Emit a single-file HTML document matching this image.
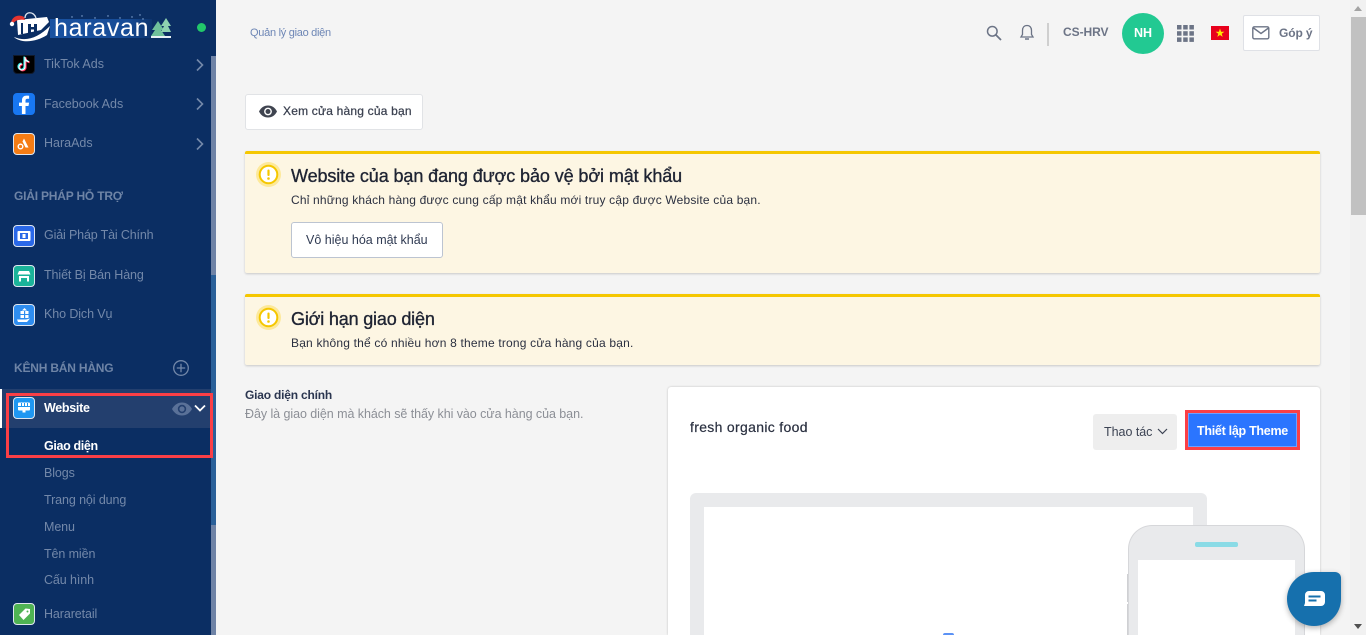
<!DOCTYPE html>
<html lang="vi"><head><meta charset="utf-8"><title>Giao diện</title>
<style>
html,body{margin:0;padding:0;width:1366px;height:635px;overflow:hidden;background:#f4f4f4;font-family:"Liberation Sans","Noto Sans CJK SC",sans-serif}
*{box-sizing:border-box}
.t{position:absolute;white-space:nowrap;line-height:18px}
.b{position:absolute}
.side{color:#7388a9;font-size:12.5px;letter-spacing:-.1px}
.ic{position:absolute;left:13px;width:22px;height:22px;border-radius:4px;border:1px solid #dfe6f0;overflow:hidden}
.chev{position:absolute;left:195px;width:10px;height:14px}
.sec{color:#6e84a6;font-size:12px;font-weight:bold;letter-spacing:-.2px}
.alert{position:absolute;left:245px;width:1075px;background:#fdf6e3;border-top:3px solid #f5c700;border-radius:2px;box-shadow:0 1px 2px rgba(0,0,0,.18)}
.h{-webkit-text-stroke:.35px #1f2433}
</style></head><body>

<!-- SIDEBAR -->
<div class="b" style="left:0;top:0;width:216px;height:635px;background:#0b2e63;overflow:hidden">
  <div class="b" style="left:211px;top:56px;width:5px;height:219px;background:#6f83a6"></div>
  <div class="b" style="left:211px;top:275px;width:5px;height:250px;background:#2a6099"></div>
  <div class="b" style="left:211px;top:525px;width:5px;height:110px;background:#6f83a6"></div>

  <!-- logo -->
  <svg class="b" style="left:0;top:0" width="180" height="48" viewBox="0 0 180 48">
    <defs><linearGradient id="g" x1="0" x2="1" y1="0" y2="0"><stop offset="0" stop-color="#1b56a8" stop-opacity=".9"/><stop offset=".75" stop-color="#1b56a8" stop-opacity=".75"/><stop offset="1" stop-color="#1b56a8" stop-opacity=".15"/></linearGradient></defs>
    <rect x="50" y="19" width="102" height="19" fill="url(#g)"/>
    <g fill="#8fb0dc"><circle cx="72" cy="17" r=".7"/><circle cx="82" cy="16" r=".7"/><circle cx="95" cy="18" r=".7"/><circle cx="108" cy="16" r=".7"/><circle cx="120" cy="18" r=".7"/><circle cx="132" cy="17" r=".7"/><circle cx="143" cy="19" r=".7"/><circle cx="140" cy="15" r=".7"/></g>
    <path d="M25 18c0-7 9-7 11 0" fill="none" stroke="#dfe6f0" stroke-width="1.300"/>
    <path d="M17 20l30-3 2 5-8 8-23 5z" fill="#fff"/>
    <rect x="21" y="23" width="2" height="11" fill="#0b2e63"/>
    <rect x="28" y="24" width="3" height="9" fill="#0b2e63"/><rect x="34" y="24" width="3" height="8" fill="#0b2e63"/><rect x="28" y="27" width="9" height="2.500" fill="#0b2e63"/>
    <path d="M14 37c12 5 24 1 36-11l-3 9c-9 6-23 9-32 3z" fill="#fff"/>
    <path d="M11 23c1-7 8-9 13-6l1 3c-5-1-10 0-12 4z" fill="#e5342f"/>
    <circle cx="12" cy="24" r="2.200" fill="#fff"/>
    <path d="M158 21l-6 9h3l-4 6h14l-4-6h3z" fill="#6fc09a"/>
    <path d="M166 18l-5 8h3l-3 6h10l-3-6h3z" fill="#8fd2b0"/>
    <rect x="151" y="36" width="20" height="2" fill="#e8f1f5"/>
  </svg>
  <div class="t" style="left:54px;top:14px;color:#fff;font-size:25px;line-height:28px;letter-spacing:.7px">haravan</div>
  <div class="b" style="left:197px;top:23px;width:9px;height:9px;border-radius:50%;background:#22c76a"></div>

  <!-- TikTok -->
  <div class="ic" style="top:55px;height:19px;background:#000;border-color:#101a2c;border-radius:0 0 4px 4px"><svg width="22" height="20" viewBox="0 0 22 20" style="position:absolute;left:-1px;top:-2px"><path d="M12 3v10a3 3 0 1 1-3-3M12 4c.6 2.400 2 3.500 4 3.800" fill="none" stroke="#ff2a55" stroke-width="1.800" transform="translate(.7 .5)"/><path d="M12 3v10a3 3 0 1 1-3-3M12 4c.6 2.400 2 3.500 4 3.800" fill="none" stroke="#35e8e8" stroke-width="1.800" transform="translate(-.7 -.5)"/><path d="M12 3v10a3 3 0 1 1-3-3M12 4c.6 2.400 2 3.500 4 3.800" fill="none" stroke="#fff" stroke-width="1.200"/></svg></div>
  <div class="t side" style="left:44px;top:55px;letter-spacing:0">TikTok Ads</div>
  <svg class="chev" style="top:58px" viewBox="0 0 10 14"><path d="M2 1.500l5.500 5.500l-5.500 5.500" fill="none" stroke="#7388a9" stroke-width="1.600"/></svg>

  <!-- Facebook -->
  <div class="ic" style="top:93px;background:#1877f2;border-color:#1877f2"><svg width="22" height="22" viewBox="0 0 22 22" style="position:absolute;left:-1px;top:-1px"><path d="M12.500 22v-9h3l.6-3.400h-3.600V7.500c0-1 .5-1.800 1.900-1.800h1.700V2.800c-.7-.1-1.600-.2-2.500-.2-2.800 0-4.600 1.700-4.600 4.500v2.500H6v3.400h2.900v9z" fill="#fff"/></svg></div>
  <div class="t side" style="left:44px;top:95px;letter-spacing:0">Facebook Ads</div>
  <svg class="chev" style="top:97px" viewBox="0 0 10 14"><path d="M2 1.500l5.500 5.500l-5.500 5.500" fill="none" stroke="#7388a9" stroke-width="1.600"/></svg>

  <!-- HaraAds -->
  <div class="ic" style="top:133px;background:#f57c14"><svg width="20" height="20" viewBox="0 0 20 20" style="position:absolute"><path d="M10 4.500l4.500 9h-3l-3-6z" fill="#fff"/><circle cx="6.500" cy="12.500" r="2.300" fill="none" stroke="#fff" stroke-width="1.400"/></svg></div>
  <div class="t side" style="left:44px;top:134px;letter-spacing:0">HaraAds</div>
  <svg class="chev" style="top:137px" viewBox="0 0 10 14"><path d="M2 1.500l5.500 5.500l-5.500 5.500" fill="none" stroke="#7388a9" stroke-width="1.600"/></svg>

  <div class="t sec" style="left:14px;top:187px">GIẢI PHÁP HỖ TRỢ</div>

  <div class="ic" style="top:225px;background:#2a68e8"><svg width="20" height="20" viewBox="0 0 20 20" style="position:absolute"><rect x="3.500" y="5" width="13" height="10" rx="1" fill="#fff"/><rect x="6" y="7" width="8" height="6" fill="#2a68e8"/><rect x="8.500" y="8" width="3" height="4" fill="#fff"/></svg></div>
  <div class="t side" style="left:44px;top:226px;letter-spacing:-.15px">Giải Pháp Tài Chính</div>

  <div class="ic" style="top:265px;background:#1bb39a"><svg width="20" height="20" viewBox="0 0 20 20" style="position:absolute"><path d="M5 5h10l1.500 3.500h-13z" fill="#fff"/><path d="M5 10h10v5.500h-2V12H7v3.500H5z" fill="#fff"/></svg></div>
  <div class="t side" style="left:44px;top:266px">Thiết Bị Bán Hàng</div>

  <div class="ic" style="top:304px;background:#2e8df0"><svg width="20" height="20" viewBox="0 0 20 20" style="position:absolute"><rect x="6.500" y="6" width="8" height="7" fill="#fff"/><path d="M10.500 3l2.500 2.500h-5z" fill="#fff"/><rect x="10" y="6" width="1.200" height="7" fill="#2e8df0"/><rect x="6.500" y="9" width="8" height="1" fill="#2e8df0"/><path d="M3 14.500h9l4-1-3 3.500H4z" fill="#fff"/></svg></div>
  <div class="t side" style="left:44px;top:305px">Kho Dịch Vụ</div>

  <div class="t sec" style="left:14px;top:359px">KÊNH BÁN HÀNG</div>
  <svg class="b" style="left:172px;top:359px" width="18" height="18" viewBox="0 0 18 18"><circle cx="9" cy="9" r="7.300" fill="none" stroke="#7388a9" stroke-width="1.300"/><path d="M9 4.800v8.400M4.800 9h8.400" stroke="#7388a9" stroke-width="1.300"/></svg>

  <!-- Website row -->
  <div class="b" style="left:0;top:389px;width:211px;height:39px;background:#233f6e"></div>
  <div class="b" style="left:0;top:389px;width:2px;height:39px;background:#fff"></div>
  <div class="ic" style="top:397px;background:#1f97f2"><svg width="20" height="20" viewBox="0 0 20 20" style="position:absolute"><rect x="4" y="4.500" width="12" height="8" rx="1" fill="#fff"/><rect x="4" y="8" width="12" height="1" fill="#1f97f2"/><rect x="7" y="5" width="1" height="3" fill="#1f97f2"/><rect x="10" y="5" width="1" height="3" fill="#1f97f2"/><rect x="13" y="5" width="1" height="3" fill="#1f97f2"/><rect x="8.500" y="12.500" width="3" height="2" fill="#fff"/></svg></div>
  <div class="t" style="left:44px;top:399px;color:#fff;font-size:12.500px;font-weight:bold;letter-spacing:-.3px">Website</div>
  <svg class="b" style="left:172px;top:402px" width="20" height="14" viewBox="0 0 20 14"><path d="M0 7c2.500-4.500 6-6.500 10-6.500S17.500 2.500 20 7c-2.500 4.500-6 6.500-10 6.500S2.500 11.500 0 7z" fill="#5a7198"/><circle cx="10" cy="7" r="4.200" fill="#233f6e"/><circle cx="10" cy="7" r="2.600" fill="#5a7198"/></svg>
  <svg class="b" style="left:194px;top:404px" width="12" height="9" viewBox="0 0 12 9"><path d="M1 1.500l5 5l5-5" fill="none" stroke="#fff" stroke-width="1.800"/></svg>

  <div class="t" style="left:44px;top:437px;color:#fff;font-size:12.500px;font-weight:bold;letter-spacing:-.35px">Giao diện</div>
  <div class="t side" style="left:44px;top:464px">Blogs</div>
  <div class="t side" style="left:44px;top:491px">Trang nội dung</div>
  <div class="t side" style="left:44px;top:518px">Menu</div>
  <div class="t side" style="left:44px;top:545px">Tên miền</div>
  <div class="t side" style="left:44px;top:571px">Cấu hình</div>

  <div class="ic" style="top:603px;background:#4fb353"><svg width="20" height="20" viewBox="0 0 20 20" style="position:absolute"><path d="M5 11l6.500-6.500 4.500.5v4.500L9.500 16z" fill="#fff"/><circle cx="13.500" cy="7.500" r="1" fill="#4fb353"/></svg></div>
  <div class="t side" style="left:44px;top:605px">Hararetail</div>

  <!-- red annotation -->
  <div class="b" style="left:6px;top:393px;width:207px;height:65px;border:3px solid #fb3f46"></div>
</div>

<!-- TOPBAR -->
<div class="t" style="left:250px;top:24px;color:#6d86b5;font-size:11px;letter-spacing:-.28px">Quản lý giao diện</div>
<svg class="b" style="left:986px;top:25px" width="16" height="16" viewBox="0 0 16 16"><circle cx="6.300" cy="6.300" r="4.800" fill="none" stroke="#6c7486" stroke-width="1.500"/><path d="M10 10l5 5" stroke="#6c7486" stroke-width="1.800"/></svg>
<svg class="b" style="left:1019px;top:24px" width="16" height="18" viewBox="0 0 16 18"><path d="M8 1.500c-3 0-4.500 2.200-4.500 5v4L2 13h12l-1.500-2.500v-4c0-2.800-1.500-5-4.500-5z" fill="none" stroke="#6c7486" stroke-width="1.300"/><path d="M6 15h4" stroke="#6c7486" stroke-width="1.500"/></svg>
<div class="b" style="left:1047px;top:23px;width:2px;height:23px;background:#cfcfcf"></div>
<div class="t" style="left:1063px;top:23px;color:#6c7486;font-size:12px;font-weight:bold;letter-spacing:-.05px">CS-HRV</div>
<div class="b" style="left:1122px;top:13px;width:42px;height:41px;border-radius:50%;background:#22c992;color:#fff;font-size:12.500px;font-weight:bold;text-align:center;line-height:41px">NH</div>
<svg class="b" style="left:1177px;top:25px" width="17" height="17" viewBox="0 0 17 17" fill="#6c7486"><rect width="4.500" height="4.500"/><rect x="6.200" width="4.500" height="4.500"/><rect x="12.400" width="4.500" height="4.500"/><rect y="6.200" width="4.500" height="4.500"/><rect x="6.200" y="6.200" width="4.500" height="4.500"/><rect x="12.400" y="6.200" width="4.500" height="4.500"/><rect y="12.400" width="4.500" height="4.500"/><rect x="6.200" y="12.400" width="4.500" height="4.500"/><rect x="12.400" y="12.400" width="4.500" height="4.500"/></svg>
<svg class="b" style="left:1211px;top:26px" width="18" height="14" viewBox="0 0 18 14"><rect width="18" height="14" fill="#e8001c"/><path d="M9 2.500l1.100 3.200h3.300l-2.700 2 1 3.200L9 9l-2.700 1.900 1-3.200-2.700-2h3.300z" fill="#ffe600"/></svg>
<div class="b" style="left:1243px;top:15px;width:77px;height:36px;background:#fff;border:1px solid #dfe1e6;border-radius:2px"></div>
<svg class="b" style="left:1252px;top:26px" width="18" height="14" viewBox="0 0 18 14"><rect x=".8" y=".8" width="16" height="12" rx="1.500" fill="none" stroke="#6c7486" stroke-width="1.400"/><path d="M1.500 2l7.500 5.500L16.500 2" fill="none" stroke="#6c7486" stroke-width="1.400"/></svg>
<div class="t" style="left:1279px;top:24px;color:#6c7486;font-size:12px;font-weight:bold;letter-spacing:-.1px">Góp ý</div>

<!-- page scrollbar -->
<div class="b" style="left:1350px;top:0;width:16px;height:635px;background:#f1f1f1"></div>
<div class="b" style="left:1351px;top:17px;width:15px;height:198px;background:#c1c1c1"></div>
<div class="b" style="left:1354px;top:6px;width:0;height:0;border-left:4px solid transparent;border-right:4px solid transparent;border-bottom:5px solid #a3a3a3"></div>
<div class="b" style="left:1354px;top:624px;width:0;height:0;border-left:4px solid transparent;border-right:4px solid transparent;border-top:5px solid #505050"></div>

<!-- view store -->
<div class="b" style="left:245px;top:94px;width:178px;height:36px;background:#fff;border:1px solid #e1e3e6;border-radius:3px"></div>
<svg class="b" style="left:259px;top:105px" width="18" height="13" viewBox="0 0 18 13"><path d="M0 6.500C2 2.500 5 .5 9 .5s7 2 9 6c-2 4-5 6-9 6s-7-2-9-6z" fill="#3f4450"/><circle cx="9" cy="6.500" r="3.900" fill="#fff"/><circle cx="9" cy="6.500" r="2.500" fill="#3f4450"/></svg>
<div class="t" style="left:283px;top:102px;color:#3b4150;font-size:12px;-webkit-text-stroke:.25px #3b4150;letter-spacing:.2px">Xem cửa hàng của bạn</div>

<!-- alert 1 -->
<div class="alert" style="top:151px;height:122px"></div>
<svg class="b" style="left:256px;top:162px" width="25" height="25" viewBox="0 0 25 25"><circle cx="12.500" cy="12.500" r="12.500" fill="#fde99a"/><circle cx="12.500" cy="12.500" r="8.800" fill="#fff" stroke="#f5c700" stroke-width="2"/><rect x="11.400" y="7.500" width="2.200" height="6.500" rx="1" fill="#f5c700"/><circle cx="12.500" cy="16.500" r="1.300" fill="#f5c700"/></svg>
<div class="t h" style="left:291px;top:165px;color:#1f2433;font-size:18px;line-height:22px;letter-spacing:-.1px">Website của bạn đang được bảo vệ bởi mật khẩu</div>
<div class="t" style="left:291px;top:191px;color:#2b3040;font-size:12px;letter-spacing:.18px">Chỉ những khách hàng được cung cấp mật khẩu mới truy cập được Website của bạn.</div>
<div class="b" style="left:291px;top:222px;width:152px;height:36px;background:#fff;border:1px solid #bcc4d1;border-radius:3px"></div>
<div class="t" style="left:306px;top:231px;color:#2f3a52;font-size:12.500px;letter-spacing:0">Vô hiệu hóa mật khẩu</div>

<!-- alert 2 -->
<div class="alert" style="top:294px;height:71px"></div>
<svg class="b" style="left:256px;top:305px" width="25" height="25" viewBox="0 0 25 25"><circle cx="12.500" cy="12.500" r="12.500" fill="#fde99a"/><circle cx="12.500" cy="12.500" r="8.800" fill="#fff" stroke="#f5c700" stroke-width="2"/><rect x="11.400" y="7.500" width="2.200" height="6.500" rx="1" fill="#f5c700"/><circle cx="12.500" cy="16.500" r="1.300" fill="#f5c700"/></svg>
<div class="t h" style="left:291px;top:308px;color:#1f2433;font-size:18px;line-height:22px;letter-spacing:-.18px">Giới hạn giao diện</div>
<div class="t" style="left:291px;top:334px;color:#2b3040;font-size:12px;letter-spacing:.19px">Bạn không thể có nhiều hơn 8 theme trong cửa hàng của bạn.</div>

<!-- section left -->
<div class="t" style="left:245px;top:386px;color:#2b3650;font-size:12px;font-weight:bold;letter-spacing:-.2px">Giao diện chính</div>
<div class="t" style="left:245px;top:405px;color:#8c8f96;font-size:12.500px;letter-spacing:-.06px">Đây là giao diện mà khách sẽ thấy khi vào cửa hàng của bạn.</div>

<!-- card -->
<div class="b" style="left:668px;top:387px;width:652px;height:248px;background:#fff;box-shadow:0 0 2px rgba(0,0,0,.22);border-radius:3px 3px 0 0"></div>
<div class="t" style="left:690px;top:418px;color:#2a3040;font-size:14px;letter-spacing:.32px;-webkit-text-stroke:.2px #2a3040">fresh organic food</div>
<div class="b" style="left:1093px;top:414px;width:84px;height:36px;background:#eeeeee;border-radius:3px"></div>
<div class="t" style="left:1104px;top:423px;color:#3c4353;font-size:12.500px;letter-spacing:-.03px">Thao tác</div>
<svg class="b" style="left:1157px;top:428px" width="11" height="7" viewBox="0 0 11 7"><path d="M1 1l4.500 4.500L10 1" fill="none" stroke="#3c4353" stroke-width="1.200"/></svg>
<div class="b" style="left:1185px;top:410px;width:115px;height:40px;background:#2b75ff;border:3px solid #fb3f46;box-shadow:inset 0 0 0 1px #6ea0ff"></div>
<div class="t" style="left:1197px;top:422px;color:#fff;font-size:12.500px;font-weight:bold;letter-spacing:-.28px">Thiết lập Theme</div>

<!-- desktop mock -->
<div class="b" style="left:690px;top:493px;width:517px;height:142px;background:#e9eaec;border-radius:6px 6px 0 0"></div>
<div class="b" style="left:704px;top:507px;width:489px;height:128px;background:#fff"></div>
<div class="b" style="left:943px;top:633px;width:11px;height:2px;background:#5b92f5;border-radius:6px 6px 0 0"></div>

<!-- phone mock -->
<div class="b" style="left:1127px;top:574px;width:2px;height:28px;background:#cfd0d3"></div>
<div class="b" style="left:1127px;top:604px;width:2px;height:31px;background:#cfd0d3"></div>
<div class="b" style="left:1128px;top:525px;width:177px;height:110px;background:#e9eaec;border:1px solid #d6d7da;border-bottom:0;border-radius:24px 24px 0 0"></div>
<div class="b" style="left:1138px;top:560px;width:157px;height:75px;background:#fff"></div>
<div class="b" style="left:1195px;top:542px;width:43px;height:5px;background:#8adbe6;border-radius:2px"></div>

<!-- chat -->
<div class="b" style="left:1287px;top:572px;width:54px;height:54px;background:#1670ad;border-radius:50% 6px 50% 50%;box-shadow:0 2px 6px rgba(0,0,0,.3)"></div>
<svg class="b" style="left:1304px;top:591px" width="21" height="16" viewBox="0 0 21 16"><path d="M5 0h12a4 4 0 0 1 4 4v7a4 4 0 0 1-4 4H0l1-3V4a4 4 0 0 1 4-4z" fill="#fff"/><rect x="4.500" y="4.500" width="12" height="2" fill="#1670ad"/><rect x="4.500" y="8.500" width="8" height="2" fill="#1670ad"/></svg>

</body></html>
